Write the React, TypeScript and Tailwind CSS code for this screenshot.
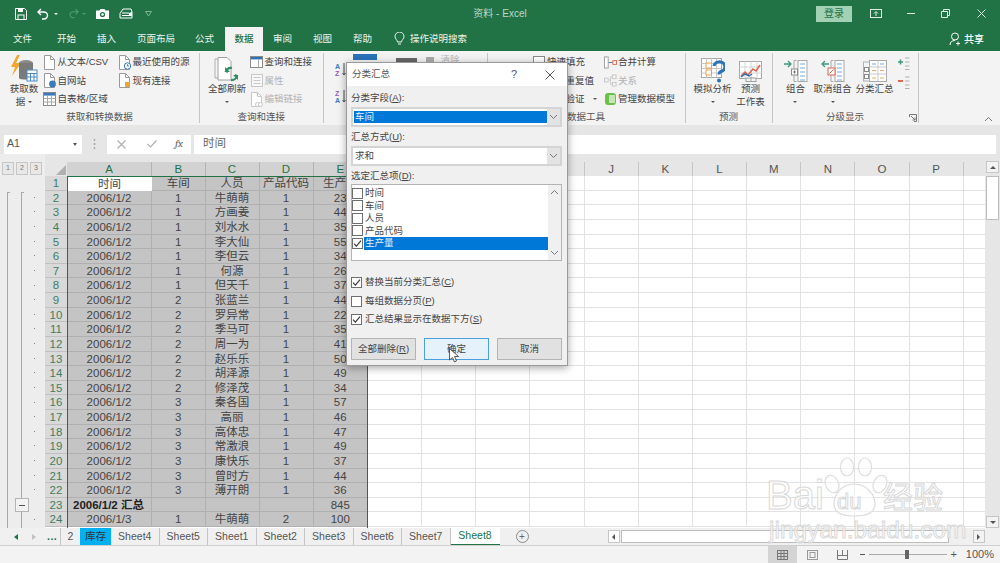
import React from "react";

const FONT = "[font-family:'Liberation_Sans','Noto_Sans_CJK_SC',sans-serif]";

function Doc({ kind = "", dim = false }: { kind?: string; dim?: boolean }) {
  const c = dim ? "#c8c8c8" : "#9a9a9a";
  return (
    <svg width="13" height="15" viewBox="0 0 13 15" className="shrink-0">
      <path d="M1.5 .5h6l4 4v10h-10z" fill="#fff" stroke={c} />
      <path d="M7.5 .5v4h4" fill="none" stroke={c} />
      {kind === "clock" && <><circle cx="9.5" cy="11" r="3.2" fill="#fff" stroke="#3b79b8" /><path d="M9.5 9.3V11h1.4" stroke="#3b79b8" fill="none" /></>}
      {kind === "web" && <circle cx="9.5" cy="11" r="3.4" fill="#3b79b8" />}
      {kind === "lock" && <rect x="7" y="9" width="5" height="5" fill="#e8a33d" />}
      {kind === "link" && <><circle cx="7.5" cy="12.5" r="2" fill="#fff" stroke={c} /><circle cx="10.5" cy="12.5" r="2" fill="#fff" stroke={c} /></>}
    </svg>
  );
}

function TableIcon() {
  return (
    <svg width="13" height="14" viewBox="0 0 13 14" className="shrink-0">
      <rect x=".5" y=".5" width="12" height="13" fill="#fff" stroke="#8a8a8a" />
      <rect x="1" y="1" width="11" height="2.6" fill="#3b79b8" />
      <path d="M.5 6.5h12M.5 10h12M4.5 3.5v10M8.5 3.5v10" stroke="#a8a8a8" fill="none" />
    </svg>
  );
}

function QueryIcon() {
  return (
    <svg width="13" height="12" viewBox="0 0 13 12" className="shrink-0">
      <rect x=".5" y=".5" width="12" height="11" fill="#fff" stroke="#8a8a8a" />
      <rect x="1" y="1" width="11" height="2.4" fill="#2b72b9" />
      <path d="M8.5 3.5v8" stroke="#a8a8a8" />
    </svg>
  );
}

function PropsIcon() {
  return (
    <svg width="12" height="13" viewBox="0 0 12 13" className="shrink-0">
      <rect x=".5" y=".5" width="11" height="12" fill="#f8f8f8" stroke="#c8c8c8" />
      <path d="M2.5 3.5h7M2.5 6.5h7M2.5 9.5h7" stroke="#c8c8c8" />
    </svg>
  );
}

function Small({ icon, label, dim = false }: { icon: React.ReactNode; label: string; dim?: boolean }) {
  return (
    <div className={`flex h-[18.5px] items-center gap-[1.5px] whitespace-nowrap ${dim ? "text-[#b4b4b4]" : "text-[#444444]"}`}>
      <div className="flex w-[13px] shrink-0 justify-center">{icon}</div>
      <span>{label}</span>
    </div>
  );
}

function Caret() {
  return <span className="mx-auto block h-0 w-0 border-x-[2px] border-t-[2px] border-x-transparent border-t-[#555555]" />;
}

function Big({ width, icon, lines, caret = false, inlineCaret = false }: { width: string; icon: React.ReactNode; lines: string[]; caret?: boolean; inlineCaret?: boolean }) {
  return (
    <div className={`flex flex-col items-center text-[#444444] ${width}`}>
      <div className="flex h-[30px] items-end justify-center">{icon}</div>
      <div className="flex flex-col items-center leading-[12.5px] whitespace-nowrap">
        {lines.map((l, i) => (
          <div key={l} className="flex items-center gap-[3px]">
            {l}
            {inlineCaret && i === lines.length - 1 && <span className="block h-0 w-0 border-x-[2px] border-t-[2px] border-x-transparent border-t-[#555555]" />}
          </div>
        ))}
        {caret && <div className="flex h-[12px] w-full items-center"><Caret /></div>}
      </div>
    </div>
  );
}

function Group({ width, label, children, launcher = false }: { width: string; label: string; children?: React.ReactNode; launcher?: boolean }) {
  return (
    <div className={`relative flex shrink-0 flex-col border-r border-[#c6c6c6] ${width} my-[2px]`}>
      <div className="flex h-[59px] overflow-hidden">{children}</div>
      <div className="flex h-[12px] items-center justify-center text-[#555555]">{label}</div>
      {launcher && (
        <svg width="8" height="8" viewBox="0 0 8 8" className="absolute bottom-[1px] right-[1px]">
          <path d="M.5 3V.5H7.5V7.5H5M2 2l4 4M6 3.5V6H3.5" stroke="#777777" fill="none" />
        </svg>
      )}
    </div>
  );
}

function Check({ on = false }: { on?: boolean }) {
  return (
    <span className="flex h-[11px] w-[11px] shrink-0 items-center justify-center border border-[#6f6f6f] bg-white">
      {on && (
        <svg width="9" height="9" viewBox="0 0 9 9">
          <path d="M1 4.6l2.4 2.5L8 1.6" stroke="#333333" strokeWidth="1.1" fill="none" />
        </svg>
      )}
    </span>
  );
}

function Chevron({ up = false }: { up?: boolean }) {
  return (
    <svg width="9" height="6" viewBox="0 0 9 6">
      <path d={up ? "M1 5l3.5-3.5L8 5" : "M1 1l3.5 3.5L8 1"} stroke="#777777" fill="none" />
    </svg>
  );
}

const names = ["牛萌萌", "方画姜", "刘水水", "李大仙", "李但云", "何源", "但天千", "张蓝兰", "罗异常", "季马可", "周一为", "赵乐乐", "胡泽源", "修泽茂", "秦各国", "高丽", "高体忠", "常激浪", "康快乐", "曾时方", "薄开朗"];
const amounts = ["23", "44", "35", "55", "34", "26", "37", "44", "22", "35", "41", "50", "49", "34", "57", "46", "47", "49", "37", "44", "36"];

type Row = { n: number; a: string; b: string; c: string; d: string; e: string; bold?: boolean };
const rows: Row[] = [
  { n: 1, a: "时间", b: "车间", c: "人员", d: "产品代码", e: "生产量" },
  ...names.map((name, i) => ({ n: i + 2, a: "2006/1/2", b: i < 7 ? "1" : i < 14 ? "2" : "3", c: name, d: "1", e: amounts[i] })),
  { n: 23, a: "2006/1/2 汇总", b: "", c: "", d: "", e: "845", bold: true },
  { n: 24, a: "2006/1/3", b: "1", c: "牛萌萌", d: "2", e: "100" },
];

const blankHeads = ["F", "G", "H", "I", "J", "K", "L", "M", "N", "O", "P", ""];

const sheetTabs = ["Sheet4", "Sheet5", "Sheet1", "Sheet2", "Sheet3", "Sheet6", "Sheet7"];
const ribbonTabs = [
  ["文件", "w-[44px] ml-[3px] pl-[10px]"],
  ["开始", "w-[40px] pl-[10px]"],
  ["插入", "w-[40px] pl-[10px]"],
  ["页面布局", "w-[58px] pl-[10px]"],
  ["公式", "w-[40px] pl-[10px]"],
];

const selCell = "flex shrink-0 items-center justify-center border-r border-b border-[#b0b0b0] bg-[#c4c4c4] pt-[2px]";

export default function App() {
  return (
    <div className={`relative flex h-[563px] w-[1000px] flex-col overflow-hidden bg-[#e6e6e6] text-[9.5px] ${FONT}`}>
      {/* title bar */}
      <div className="flex h-[27px] shrink-0 items-center bg-[#217346] text-[#dcefe4]">
        <div className="flex items-center pl-[15px]">
          <svg width="12" height="12" viewBox="0 0 12 12"><path d="M.5.5h9l2 2v9H.5z" fill="none" stroke="#fff" /><rect x="3" y="1" width="5" height="3" fill="#fff" /><rect x="3" y="7" width="6" height="4.5" fill="none" stroke="#fff" /></svg>
          <svg width="14" height="12" viewBox="0 0 14 12" className="ml-[10px]"><path d="M4 1L1 4l3 3M1 4h6a3.5 3.5 0 0 1 0 7H5" fill="none" stroke="#fff" strokeWidth="1.4" /></svg>
          <span className="ml-[3px] h-0 w-0 border-x-[2px] border-t-[2px] border-x-transparent border-t-white" />
          <svg width="12" height="11" viewBox="0 0 14 12" className="ml-[9px]"><path d="M10 1l3 3-3 3M13 4H7a3.5 3.5 0 0 0 0 7h2" fill="none" stroke="#4f9a72" strokeWidth="1.3" /></svg>
          <span className="ml-[3px] h-0 w-0 border-x-[2px] border-t-[2px] border-x-transparent border-t-[#4f9a72]" />
          <svg width="13" height="10" viewBox="0 0 13 10" className="ml-[10px]"><path d="M0 1.5h3.5L4.5 0h4l1 1.5H13V10H0z" fill="#fff" /><circle cx="6.5" cy="5.5" r="2.6" fill="#217346" /><circle cx="6.5" cy="5.5" r="1.3" fill="#fff" /></svg>
          <svg width="14" height="12" viewBox="0 0 14 12" className="ml-[10px]"><path d="M1 5.5L4 1h8l1 3v6H1z" fill="none" stroke="#fff" /><path d="M3 5h7M3 7.5h7" stroke="#fff" /><path d="M10 5l3-1v4h-3z" fill="#fff" /></svg>
          <svg width="7" height="6" viewBox="0 0 7 6" className="ml-[12px]"><path d="M.5.5h6L3.5 5z" fill="none" stroke="#7db597" /></svg>
        </div>
        <div className="absolute left-0 right-0 flex justify-center text-[10px] text-[#bcd8c8]">资料 - Excel</div>
        <div className="relative ml-auto flex items-center pr-[14px]">
          <div className="flex h-[16px] w-[36px] items-center justify-center bg-[#a3d1b6] text-[10px] text-[#217346]">登录</div>
          <svg width="12" height="9" viewBox="0 0 12 9" className="ml-[18px]"><rect x=".5" y=".5" width="11" height="8" fill="none" stroke="#dcefe4" /><path d="M6 7V3M4 4.5L6 2.5l2 2" stroke="#dcefe4" fill="none" /></svg>
          <span className="ml-[25px] block h-px w-[8px] bg-[#dcefe4]" />
          <svg width="9" height="9" viewBox="0 0 9 9" className="ml-[26px]"><path d="M2.5 2V.5h6v6H7M.5 2.5h6v6h-6z" fill="none" stroke="#dcefe4" /></svg>
          <svg width="9" height="9" viewBox="0 0 9 9" className="ml-[27px]"><path d="M.5.5l8 8M8.5.5l-8 8" stroke="#dcefe4" /></svg>
        </div>
      </div>

      {/* ribbon tabs */}
      <div className="flex h-[24px] shrink-0 items-center bg-[#217346] text-[#eef6f1]">
        {ribbonTabs.map(([t, c]) => (
          <div key={t} className={`flex h-full items-center ${c}`}>{t}</div>
        ))}
        <div className="flex h-full w-[38px] items-center justify-center bg-[#f3f3f3] font-medium text-[#217346]">数据</div>
        <div className="flex h-full w-[40px] items-center pl-[10px]">审阅</div>
        <div className="flex h-full w-[40px] items-center pl-[10px]">视图</div>
        <div className="flex h-full w-[40px] items-center pl-[10px]">帮助</div>
        <svg width="11" height="14" viewBox="0 0 11 14" className="ml-[11px]"><path d="M3.5 10c0-2-2.5-3-2.5-5.500a4.500 4.500 0 0 1 9 0C10 7 7.500 8 7.500 10zM4 12h3" fill="none" stroke="#eef6f1" /></svg>
        <span className="ml-[5px]">操作说明搜索</span>
        <div className="ml-auto flex items-center gap-[2px] pr-[16px]">
          <svg width="13" height="14" viewBox="0 0 13 14"><circle cx="6" cy="4.500" r="3.500" fill="none" stroke="#fff" /><path d="M1 13c0-3 2-4.500 5-4.500M9 9.500v4M7 11.500h4" fill="none" stroke="#fff" /></svg>
          <span className="text-[10px] font-medium text-white">共享</span>
        </div>
      </div>

      {/* ribbon */}
      <div className="relative flex h-[74px] shrink-0 bg-[#f3f3f3]">
        <Group width="w-[200px]" label="获取和转换数据">
          <div className="ml-[6px] w-[36px] shrink-0">
            <Big
              width="w-[36px]"
              icon={
                <svg width="28" height="28" viewBox="0 0 28 28">
                  <path d="M7 0L1 12h4l-3 9 9-13H6l4-8z" fill="#f0a830" />
                  <ellipse cx="16" cy="8" rx="7" ry="3" fill="#8a8a8a" />
                  <path d="M9 8v15c0 2 14 2 14 0V8z" fill="#7a7a7a" />
                  <rect x="17" y="15" width="10" height="11" fill="#fff" stroke="#4b8bc4" />
                  <path d="M17 18.500h10M17 22h10M20.500 18v8M24 18v8" stroke="#4b8bc4" />
                </svg>
              }
              lines={["获取数", "据"]}
              inlineCaret
            />
          </div>
          <div className="ml-[1px] w-[75px] shrink-0">
            <Small icon={<Doc />} label="从文本/CSV" />
            <Small icon={<Doc kind="web" />} label="自网站" />
            <Small icon={<TableIcon />} label="自表格/区域" />
          </div>
          <div>
            <Small icon={<Doc kind="clock" />} label="最近使用的源" />
            <Small icon={<Doc kind="lock" />} label="现有连接" />
          </div>
        </Group>
        <Group width="w-[123.500px]" label="查询和连接">
          <div className="ml-[7px] w-[40px] shrink-0">
            <Big
              width="w-[40px]"
              icon={
                <svg width="26" height="27" viewBox="0 0 26 27">
                  <path d="M1 3h11v19H1z" fill="#f4f4f4" stroke="#b0b0b0" />
                  <path d="M4 1.500h9l4 4V24H4z" fill="#fff" stroke="#a0a0a0" />
                  <path d="M18 12a5.500 5.500 0 0 0-6 3l2 1M17 24a5.500 5.500 0 0 0 6-4l-2-1" fill="none" stroke="#2f8f66" strokeWidth="2.200" />
                  <path d="M11 11v5h5zM24 24v-5h-5z" fill="#2f8f66" />
                </svg>
              }
              lines={["全部刷新"]}
              caret
            />
          </div>
          <div className="ml-[3px]">
            <Small icon={<QueryIcon />} label="查询和连接" />
            <Small icon={<PropsIcon />} label="属性" dim />
            <Small icon={<Doc kind="link" dim />} label="编辑链接" dim />
          </div>
        </Group>
        <Group width="w-[164px]" label="排序和筛选">
          <div className="ml-[11px] flex w-[12px] flex-col gap-[12px] pt-[9px]">
            <svg width="11" height="15" viewBox="0 0 11 15"><text x="0" y="7" fontSize="7" fontWeight="700" fill="#3b79b8">A</text><text x="0" y="14" fontSize="7" fontWeight="700" fill="#8e5fb8">Z</text><path d="M9 1v12M7.500 11L9 13l1.500-2" stroke="#555555" fill="none" /></svg>
            <svg width="11" height="15" viewBox="0 0 11 15"><text x="0" y="7" fontSize="7" fontWeight="700" fill="#8e5fb8">Z</text><text x="0" y="14" fontSize="7" fontWeight="700" fill="#3b79b8">A</text><path d="M9 1v12M7.500 11L9 13l1.500-2" stroke="#555555" fill="none" /></svg>
          </div>
          <div className="ml-[6px] mt-[1px] h-[6px] w-[24px] bg-[#2b72b9]" />
          <div className="ml-[19px] mt-[5px] h-[4px] w-[21px] bg-[#666666]" />
          <div className="ml-[9px] mt-[4px] h-[5px] w-[8px] bg-[#aaaaaa]" />
          <span className="ml-[7px] text-[#b4b4b4]">清除</span>
        </Group>
        <Group width="w-[198px]" label="数据工具">
          <div className="ml-[45px] w-[71px] shrink-0">
            <Small icon={<span className="block h-[12px] w-[12px] border border-[#8a8a8a] bg-white" />} label="快速填充" />
            <div className="flex h-[18.500px] items-center whitespace-nowrap pl-[14px] text-[#444444]">删除重复值</div>
            <div className="flex h-[18.500px] items-center whitespace-nowrap pl-[14px] text-[#444444]">
              <span>数据验证</span>
              <span className="ml-[8px] block h-0 w-0 border-x-[2px] border-t-[2px] border-x-transparent border-t-[#555555]" />
            </div>
          </div>
          <div>
            <Small
              icon={<svg width="14" height="13" viewBox="0 0 14 13"><rect x=".5" y=".5" width="4" height="12" fill="#fff" stroke="#9a9a9a" /><path d="M5 6.500h4" stroke="#3b79b8" /><rect x="9.500" y="4.500" width="4" height="4" fill="#fff" stroke="#e0604a" /></svg>}
              label="合并计算"
            />
            <Small
              dim
              icon={<svg width="14" height="13" viewBox="0 0 14 13"><rect x=".5" y="4" width="4" height="4" fill="none" stroke="#c8c8c8" /><rect x="9" y=".5" width="4" height="4" fill="none" stroke="#c8c8c8" /><rect x="9" y="8.500" width="4" height="4" fill="none" stroke="#c8c8c8" /><path d="M5 6h2M7 2.500v8M7 2.500h2M7 10.500h2" stroke="#c8c8c8" /></svg>}
              label="关系"
            />
            <Small
              icon={<svg width="13" height="14" viewBox="0 0 13 14"><rect x="1" y="1" width="11" height="12" rx="3" fill="#6cc04a" /><rect x="5" y="3" width="6" height="8" fill="#fff" opacity=".6" /></svg>}
              label="管理数据模型"
            />
          </div>
        </Group>
        <Group width="w-[87px]" label="预测">
          <div className="ml-[8px] w-[38px] shrink-0">
            <Big
              width="w-[38px]"
              icon={
                <svg width="24" height="25" viewBox="0 0 24 25">
                  <rect x=".5" y=".5" width="20" height="19" fill="#fff" stroke="#a8a8a8" />
                  <path d="M.5 5.500h20M.5 10.500h20M.5 15h20M5.500.5v19M10.500.5v19M15.500.5v19" stroke="#c8c8c8" />
                  <rect x="5" y="5" width="5.500" height="5" fill="#fff" stroke="#f0a050" />
                  <rect x="5" y="12" width="5.500" height="5" fill="#fff" stroke="#f0a050" />
                  <path d="M13 8a5.500 5 0 1 1 7 5.500c-1.500.6-2 1.500-2 3" fill="none" stroke="#2b72b9" strokeWidth="3" />
                  <circle cx="18" cy="22.500" r="2" fill="#2b72b9" />
                </svg>
              }
              lines={["模拟分析"]}
              caret
            />
          </div>
          <div className="ml-[4px] w-[30px] shrink-0">
            <Big
              width="w-[30px]"
              icon={
                <svg width="23" height="22" viewBox="0 0 23 22">
                  <rect x=".5" y=".5" width="22" height="17" fill="#fff" stroke="#a8a8a8" />
                  <path d="M.5 6h22M.5 12h22M6 .5v17M12 .5v17M18 .5v17" stroke="#d4d4d4" />
                  <path d="M2 15l4-4 3 3 5-6 3 2 4-6" fill="none" stroke="#e0604a" strokeWidth="1.500" />
                  <path d="M2 16l4-3 4 2 3-2" fill="none" stroke="#2b72b9" strokeWidth="1.500" />
                  <rect x="7" y="17" width="6" height="3.500" fill="#f4f4f4" stroke="#a0a0a0" />
                  <rect x="12" y="17" width="5" height="3.500" fill="#f4f4f4" stroke="#a0a0a0" />
                </svg>
              }
              lines={["预测", "工作表"]}
            />
          </div>
        </Group>
        <Group width="w-[146px]" label="分级显示" launcher>
          <div className="ml-[11px] w-[24px] shrink-0">
            <Big
              width="w-[24px]"
              icon={
                <svg width="24" height="23" viewBox="0 0 24 23">
                  <path d="M0 4h6M4 1l3 3-3 3" stroke="#3f9a78" strokeWidth="1.300" fill="none" />
                  <path d="M12.500 .5H10v21h2.500" stroke="#a8a8a8" fill="none" />
                  <rect x="14" y=".5" width="9" height="21" fill="#fff" stroke="#a8a8a8" />
                  <path d="M16 4h5M16 8h5M16 12h5M16 16h5M16 20h5" stroke="#72a8d8" />
                  <rect x="7.500" y="9" width="6" height="6" fill="#fff" stroke="#8a8a8a" />
                  <path d="M9 12h3M10.500 10.500v3" stroke="#777777" />
                </svg>
              }
              lines={["组合"]}
              caret
            />
          </div>
          <div className="ml-[6px] w-[38px] shrink-0">
            <Big
              width="w-[38px]"
              icon={
                <svg width="24" height="23" viewBox="0 0 24 23">
                  <path d="M8 4H2M4 1L1 4l3 3" stroke="#3f9a78" strokeWidth="1.300" fill="none" />
                  <path d="M12.500 .5H10v21h2.500" stroke="#a8a8a8" fill="none" />
                  <rect x="14" y=".5" width="9" height="21" fill="#fff" stroke="#a8a8a8" />
                  <path d="M16 4h5M16 8h5M16 12h5M16 16h5M16 20h5" stroke="#72a8d8" />
                  <rect x="7" y="8" width="7" height="7" fill="#fff" stroke="#e0604a" />
                  <path d="M8.500 13.500l4-4" stroke="#e0604a" />
                </svg>
              }
              lines={["取消组合"]}
              caret
            />
          </div>
          <div className="ml-[4px] w-[38px] shrink-0">
            <Big
              width="w-[38px]"
              icon={
                <svg width="24" height="23" viewBox="0 0 24 23">
                  <rect x=".5" y="2" width="6" height="19" fill="#f4f4f4" stroke="#b0b0b0" />
                  <rect x="6.500" y=".5" width="17" height="21" fill="#fff" stroke="#a8a8a8" />
                  <path d="M6.500 7h17M6.500 14h17M15 .5v21" stroke="#c8c8c8" />
                  <path d="M9 4h4M17 4h4" stroke="#72a8d8" />
                  <path d="M9 10.500h4M17 10.500h4M9 18h4M17 18h4" stroke="#f0a860" />
                  <rect x="1.500" y="7.500" width="4" height="4" fill="#fff" stroke="#8a8a8a" />
                  <rect x="1.500" y="14.500" width="4" height="4" fill="#fff" stroke="#8a8a8a" />
                </svg>
              }
              lines={["分类汇总"]}
            />
          </div>
          <div className="ml-[3px] flex flex-col gap-[6px] pt-[4px]">
            <svg width="13" height="13" viewBox="0 0 13 13"><path d="M1 5h5M3.500 2.500v5" stroke="#3f9a78" strokeWidth="1.400" /><path d="M8 1h4.500M8 5h4.500M8 9h4.500M8 12.500h4.500" stroke="#b0b0b0" /></svg>
            <svg width="13" height="13" viewBox="0 0 13 13"><path d="M1 5h5" stroke="#e0402a" strokeWidth="1.600" /><path d="M8 1h4.500M8 5h4.500M8 9h4.500M8 12.500h4.500" stroke="#b0b0b0" /></svg>
          </div>
        </Group>
        <div className="ml-auto flex items-end pb-[3px] pr-[7px]"><Chevron up /></div>
      </div>

      {/* formula bar */}
      <div className="flex h-[29px] shrink-0 items-end bg-[#e6e6e6] pb-[0.5px] pl-[4px] pr-[4px] text-[#555555]">
        <div className="flex h-[19px] w-[78px] items-center justify-between bg-white pl-[3px] pr-[5px] text-[10.500px]">
          A1
          <span className="block h-0 w-0 border-x-[2.500px] border-t-[3px] border-x-transparent border-t-[#555555]" />
        </div>
        <div className="flex h-[19px] w-[25px] items-center justify-center text-[#aaaaaa]">
          <svg width="3" height="10" viewBox="0 0 3 10"><path d="M1.500 0v2M1.500 4v2M1.500 8v2" stroke="#aaaaaa" strokeWidth="1.500" /></svg>
        </div>
        <div className="flex h-[19px] w-[84px] items-center bg-white pl-[10px]">
          <svg width="9" height="9" viewBox="0 0 9 9"><path d="M.5.5l8 8M8.500.5l-8 8" stroke="#b0b0b0" strokeWidth="1.200" /></svg>
          <svg width="10" height="8" viewBox="0 0 10 8" className="ml-[21px]"><path d="M.5 4l3 3 6-6.500" stroke="#b0b0b0" strokeWidth="1.200" fill="none" /></svg>
          <span className="ml-[18px] font-serif text-[11px] italic text-[#666666]">fx</span>
        </div>
        <div className="ml-[3px] flex h-[19px] flex-1 items-center bg-white pl-[9px] text-[11.500px] text-[#666666]">时间</div>
      </div>

      {/* sheet */}
      <div className="flex h-[374px] shrink-0">
        <div className="relative flex w-[45px] shrink-0 flex-col bg-[#ededed] pt-[8px]">
          <div className="flex h-[14px] gap-[2px] pl-[2px] text-[7px] text-[#777777]">
            {["1", "2", "3"].map((l) => (
              <div key={l} className="flex h-[13px] w-[12px] items-center justify-center border border-[#c6c6c6] bg-[#e8e8e8]">{l}</div>
            ))}
          </div>
          <div className="relative flex-1">
            <span className="absolute left-[7px] top-[16px] bottom-0 w-[3px] border-l border-t border-[#a8a8a8]" />
            <span className="absolute left-[21px] top-[16px] h-[306px] w-[3px] border-l border-t border-[#a8a8a8]" />
            <span className="absolute left-[21px] top-[336px] bottom-0 border-l border-[#a8a8a8]" />
            <div className="absolute left-[15px] top-[322px] flex h-[14px] w-[14px] items-center justify-center border border-[#b4b4b4] bg-[#f3f3f3]">
              <span className="block h-px w-[6px] bg-[#555555]" />
            </div>
            <div className="absolute left-[34px] top-[14px] flex flex-col">
              {rows.slice(1).map((r) => (
                <div key={r.n} className="flex h-[14.630px] items-center">
                  {r.n !== 23 && <span className="block h-px w-px bg-[#888888]" />}
                </div>
              ))}
            </div>
          </div>
        </div>
        <div className="relative w-[940px] shrink-0 overflow-hidden pt-[8px]">
          {/* column headers */}
          <div className="flex h-[14px] text-[11.500px] leading-none">
            <div className="flex w-[22px] shrink-0 items-end justify-end bg-[#e6e6e6] pr-[1px] pb-[1px]">
              <span className="block h-0 w-0 border-b-[10px] border-l-[10px] border-b-[#b0b0b0] border-l-transparent" />
            </div>
            {[["A", "w-[85px]"], ["B", "w-[53.500px]"], ["C", "w-[54px]"], ["D", "w-[54px]"], ["E", "w-[54.500px]"]].map(([h, w]) => (
              <div key={h} className={`flex shrink-0 items-center justify-center border-r border-[#b4b4b4] bg-[#d2d2d2] pt-px text-[#217346] ${w}`}>{h}</div>
            ))}
            {blankHeads.map((h, i) => (
              <div key={i} className="flex w-[54.170px] shrink-0 items-center justify-center border-r border-[#c6c6c6] bg-[#e6e6e6] pt-px text-[#555555]">{h}</div>
            ))}
          </div>
          {/* rows */}
          <div className="relative h-[352px] overflow-hidden bg-white">
            {rows.map((r) => (
              <div key={r.n} className="flex h-[14.630px] text-[11.500px] leading-none text-[#444444]">
                <div className="flex w-[22px] shrink-0 items-center justify-center border-b border-[#c0c0c0] bg-[#d9d9d9] pt-[2px] text-[#3f7f5f]">{r.n}</div>
                {r.n === 1 ? (
                  <div className="flex w-[85px] shrink-0 items-center justify-center bg-white pt-[2px]">{r.a}</div>
                ) : (
                  <div className={`${selCell} w-[85px] ${r.bold ? "justify-start! pl-[6px] font-bold text-[#222222]" : ""}`}>{r.a}</div>
                )}
                <div className={`${selCell} w-[53.500px]`}>{r.b}</div>
                <div className={`${selCell} w-[54px]`}>{r.c}</div>
                <div className={`${selCell} w-[54px]`}>{r.d}</div>
                <div className={`${selCell} w-[54.500px]`}>{r.e}</div>
                {blankHeads.map((_, i) => (
                  <div key={i} className="w-[54.170px] shrink-0 border-r border-b border-[#e2e2e2]" />
                ))}
              </div>
            ))}
            {/* selection outline */}
            <div className="absolute left-[22px] top-0 h-[360px] w-[301px] border-x-[1.500px] border-t-[1.500px] border-[#217346]" />
          </div>
        </div>
        {/* vertical scrollbar */}
        <div className="flex w-[15px] shrink-0 flex-col items-center bg-[#e6e6e6] pt-[7px]">
          <div className="flex h-[12px] w-[13px] items-center justify-center border border-[#c6c6c6] bg-[#f3f3f3]"><span className="block h-0 w-0 border-x-[3px] border-b-[3px] border-x-transparent border-b-[#555555]" /></div>
          <div className="mt-[3px] h-[44px] w-[13px] border border-[#bdbdbd] bg-white" />
          <div className="mt-auto flex h-[12px] w-[13px] items-center justify-center border border-[#c6c6c6] bg-[#f3f3f3]"><span className="block h-0 w-0 border-x-[3px] border-t-[3px] border-x-transparent border-t-[#555555]" /></div>
        </div>
      </div>

      {/* sheet tabs */}
      <div className="flex h-[17px] shrink-0 items-center bg-[#f0f0f0] text-[10.500px] text-[#555555]">
        <div className="flex w-[60px] shrink-0 items-center pl-[14px]">
          <span className="block h-0 w-0 border-y-[3px] border-r-[4px] border-y-transparent border-r-[#217346]" />
          <span className="ml-[14px] block h-0 w-0 border-y-[3px] border-l-[4px] border-y-transparent border-l-[#c0c0c0]" />
          <span className="ml-[11px] font-bold tracking-[0.5px] text-[#217346]">...</span>
        </div>
        <div className="flex h-full w-[20px] shrink-0 items-center justify-center border-l border-[#c6c6c6]">2</div>
        <div className="flex h-full w-[31px] shrink-0 items-center justify-center bg-[#00b0f0] text-[#333333]">库存</div>
        {sheetTabs.map((t) => (
          <div key={t} className="flex h-full w-[48.500px] shrink-0 items-center justify-center border-r border-[#c6c6c6]">{t}</div>
        ))}
        <div className="flex h-full w-[49px] shrink-0 items-center justify-center border-b border-[#217346] bg-white font-medium text-[#217346]">Sheet8</div>
        <div className="ml-[16px] flex h-[13px] w-[13px] shrink-0 items-center justify-center rounded-full border border-[#8a8a8a] text-[10px] leading-none text-[#666666]">+</div>
        <div className="ml-[79px] flex h-[13px] w-[12px] shrink-0 items-center justify-center border border-[#c6c6c6] bg-white"><span className="block h-0 w-0 border-y-[3px] border-r-[3px] border-y-transparent border-r-[#555555]" /></div>
        <div className="ml-[1px] h-[13px] w-[328px] shrink-0 border border-[#bdbdbd] bg-white" />
        <div className="ml-[24px] flex h-[13px] w-[12px] shrink-0 items-center justify-center border border-[#c6c6c6] bg-[#f3f3f3]"><span className="block h-0 w-0 border-y-[3px] border-l-[3px] border-y-transparent border-l-[#555555]" /></div>
      </div>

      {/* status bar */}
      <div className="flex h-[18px] shrink-0 items-center justify-end border-t border-[#d0d0d0] bg-[#f3f3f3] pr-[6px] text-[11px] text-[#555555]">
        <div className="flex h-full w-[29px] items-center justify-center bg-[#d4d4d4]">
          <svg width="11" height="10" viewBox="0 0 11 10"><rect x=".5" y=".5" width="10" height="9" fill="none" stroke="#777777" /><path d="M.5 3.500h10M.5 6.500h10M4 .5v9M7 .5v9" stroke="#777777" /></svg>
        </div>
        <svg width="11" height="10" viewBox="0 0 11 10" className="ml-[10px]"><rect x=".5" y=".5" width="10" height="9" fill="none" stroke="#999999" /><rect x="3" y="2.500" width="5" height="5" fill="none" stroke="#999999" /></svg>
        <svg width="11" height="10" viewBox="0 0 11 10" className="ml-[19px]"><path d="M.5 0v9.500h10V0M.5 5.500h10M5.500 0v5.500" fill="none" stroke="#777777" /></svg>
        <span className="ml-[12px] block h-px w-[5px] bg-[#555555]" />
        <div className="relative ml-[4px] h-px w-[78px] bg-[#aaaaaa]">
          <span className="absolute left-[36px] top-[-4px] block h-[9px] w-[4px] bg-[#666666]" />
        </div>
        <span className="ml-[3px] leading-none">+</span>
        <span className="ml-[9px]">100%</span>
      </div>

      {/* dialog */}
      <div className="absolute left-[346px] top-[62px] flex h-[304px] w-[222px] flex-col border border-[#9a9a9a] bg-[#f0f0f0] pl-[4px] pr-[5px] text-[#444444] shadow-[0_2px_8px_rgba(0,0,0,0.35)]">
        <div className="-ml-[4px] -mr-[5px] flex h-[23px] shrink-0 items-center bg-white pl-[5px] text-[#555555]">
          <span>分类汇总</span>
          <span className="ml-[121px] text-[11px]">?</span>
          <svg width="10" height="10" viewBox="0 0 10 10" className="ml-[28px]"><path d="M.5.5l9 9M9.500.5l-9 9" stroke="#555555" /></svg>
        </div>
        <div className="mt-[5px] h-[14px] shrink-0 leading-[14px]">分类字段(<u>A</u>):</div>
        <div className="mt-[2px] flex h-[20px] shrink-0 items-center border-2 border-[#d4d4d4] bg-white pl-[1px]">
          <div className="flex h-[12px] flex-1 items-center bg-[#0078d7] pl-[1px] text-[#e8f2fb]">车间</div>
          <div className="flex h-full w-[13px] items-center justify-center bg-[#e3e3e3]"><Chevron /></div>
        </div>
        <div className="mt-[3px] h-[14px] shrink-0 leading-[14px]">汇总方式(<u>U</u>):</div>
        <div className="mt-[2px] flex h-[20px] shrink-0 items-center border-2 border-[#d4d4d4] bg-white pl-[1px]">
          <div className="flex-1 pl-[1px]">求和</div>
          <div className="flex h-full w-[13px] items-center justify-center bg-[#e3e3e3]"><Chevron /></div>
        </div>
        <div className="mt-[3px] h-[14px] shrink-0 leading-[14px]">选定汇总项(<u>D</u>):</div>
        <div className="mt-[1px] flex h-[77px] shrink-0 border border-[#b4b4b4] bg-white">
          <div className="flex-1 pt-[2px]">
            {["时间", "车间", "人员", "产品代码", "生产量"].map((t, i) => (
              <div key={t} className="flex h-[12.500px] items-center">
                <Check on={i === 4} />
                <div className={`ml-[1px] flex h-full flex-1 items-center pl-[1px] ${i === 4 ? "bg-[#0078d7] text-[#e8f2fb]" : ""}`}>{t}</div>
              </div>
            ))}
          </div>
          <div className="flex w-[13px] flex-col items-center justify-between bg-[#f0f0f0] py-[4px]">
            <Chevron up />
            <Chevron />
          </div>
        </div>
        <div className="mt-[15px] flex h-[13px] shrink-0 items-center gap-[3px]"><Check on /><span>替换当前分类汇总(<u>C</u>)</span></div>
        <div className="mt-[6px] flex h-[13px] shrink-0 items-center gap-[3px]"><Check /><span>每组数据分页(<u>P</u>)</span></div>
        <div className="mt-[5px] flex h-[13px] shrink-0 items-center gap-[3px]"><Check on /><span>汇总结果显示在数据下方(<u>S</u>)</span></div>
        <div className="mt-[12px] flex h-[22px] shrink-0 justify-between">
          <div className="flex w-[65px] items-center justify-center border border-[#b4b4b4] bg-[#e1e1e1]"><span>全部删除(<u>R</u>)</span></div>
          <div className="flex w-[65px] items-center justify-center border border-[#4a9fdc] bg-[#e5f1fb]">确定</div>
          <div className="flex w-[65px] items-center justify-center border border-[#b4b4b4] bg-[#e1e1e1]">取消</div>
        </div>
      </div>
      {/* mouse pointer */}
      <svg width="11" height="15" viewBox="0 0 11 15" className="absolute left-[449px] top-[348px]">
        <path d="M.5.5v11.500l3-2.500 2 4.500 2-1-2-4.500h4z" fill="#fff" stroke="#333333" strokeWidth=".8" />
      </svg>

      {/* watermark */}
      <svg width="80" height="70" viewBox="0 0 80 70" className="absolute left-[820px] top-[452px]">
        <g fill="#ffffff" stroke="#dddddd" strokeWidth="1.200" fillOpacity=".55">
          <ellipse cx="27" cy="15" rx="6.500" ry="9" />
          <ellipse cx="45" cy="15" rx="6.500" ry="9" />
          <ellipse cx="12" cy="32" rx="6.500" ry="9" transform="rotate(-25 12 32)" />
          <ellipse cx="60" cy="32" rx="6.500" ry="9" transform="rotate(25 60 32)" />
          <path d="M34 32c-12 0-20 10-20 20 0 9 8 12 20 12s21-3 21-12c0-10-9-20-21-20z" />
        </g>
      </svg>
      <div className="pointer-events-none absolute left-[766px] top-[471px] text-[40px] leading-[48px] text-white/60 [-webkit-text-stroke:1px_#d8d8d8]">Bai</div>
      <div className="pointer-events-none absolute left-[837px] top-[489px] text-[22px] leading-[26px] text-white/60 [-webkit-text-stroke:1px_#d8d8d8]">du</div>
      <div className="pointer-events-none absolute left-[883px] top-[480px] text-[30px] leading-[36px] text-white/60 [-webkit-text-stroke:1px_#d8d8d8]">经验</div>
      <div className="pointer-events-none absolute left-[769px] top-[516px] text-[24.500px] leading-[28px] text-white/60 [-webkit-text-stroke:1px_#d8d8d8]">jingyan.baidu.com</div>
    </div>
  );
}
